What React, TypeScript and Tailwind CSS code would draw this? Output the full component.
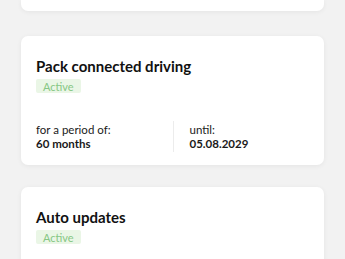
import React from 'react';

const font = { fontFamily: 'Lato, "Noto Sans", sans-serif' };

const Badge = () => (
  <span className="inline-flex h-[14px] items-center rounded-[2px] bg-[#eaf6e6] px-[7px] text-[11px] leading-none text-[#86c784]">
    Active
  </span>
);

const Card = ({ children, className = '' }: { children?: React.ReactNode; className?: string }) => (
  <div className={`rounded-[7px] bg-white shadow-[0_1px_5px_rgba(0,0,0,0.06)] ${className}`}>{children}</div>
);

const App = () => {
  return (
    <div className="h-[259px] overflow-hidden bg-[#f2f2f2] px-[21px]" style={font}>
      <Card className="h-[11px] rounded-t-none" />

      <Card className="mt-[25px] px-[15px] pt-[20px] pb-[13px]">
        <h3 className="text-[15px] font-bold leading-[20px] text-[#111]">Pack connected driving</h3>
        <div className="mt-[3px] flex">
          <Badge />
        </div>
        <div className="mt-[28px] grid grid-cols-2">
          <div className="py-[2px] text-[11.5px] leading-[13.5px] text-[#1a1a1a]">
            <div>for a period of:</div>
            <div className="font-bold">60 months</div>
          </div>
          <div className="border-l border-[#ececec] py-[2px] pl-4 text-[11.5px] leading-[13.5px] text-[#1a1a1a]">
            <div>until:</div>
            <div className="font-bold">05.08.2029</div>
          </div>
        </div>
      </Card>

      <Card className="mt-[22px] h-[120px] px-[15px] pt-[20px]">
        <h3 className="text-[15px] font-bold leading-[20px] text-[#111]">Auto updates</h3>
        <div className="mt-[3px] flex">
          <Badge />
        </div>
      </Card>
    </div>
  );
};

export default App;
